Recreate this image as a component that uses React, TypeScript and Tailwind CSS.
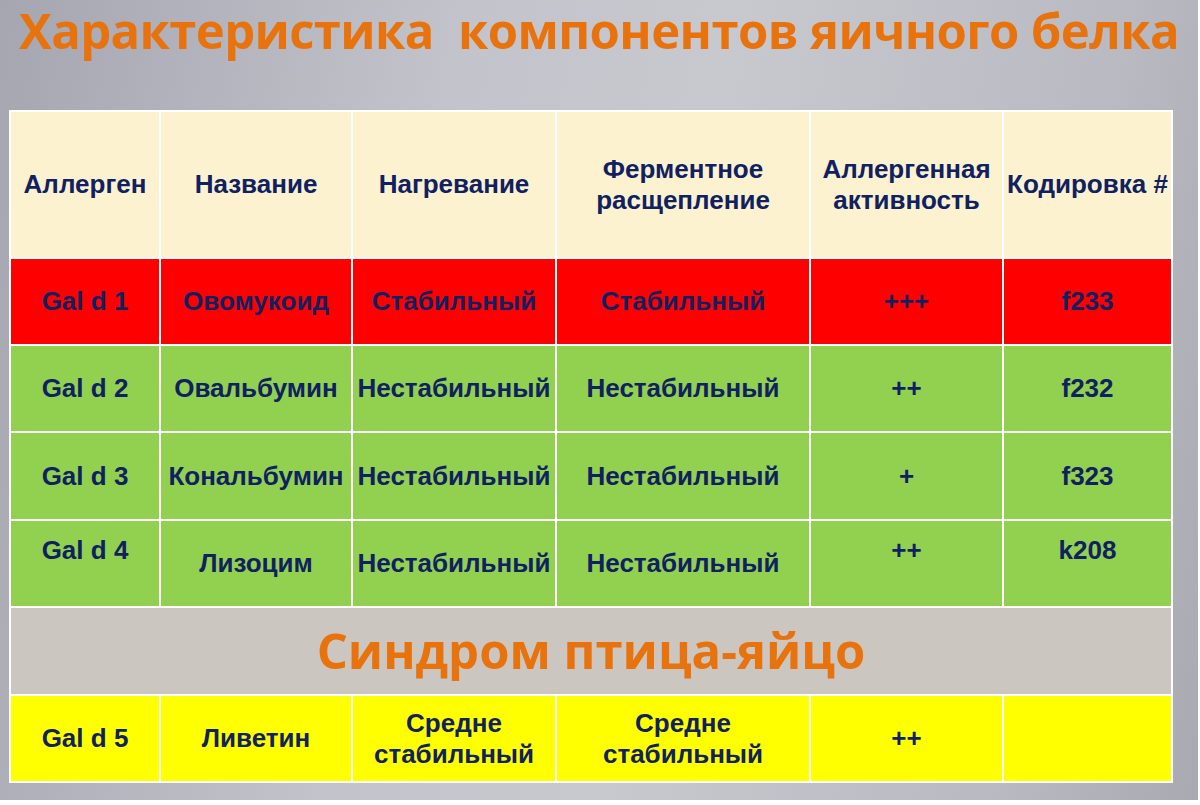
type Cell = { text: string; raised?: boolean };

type Row = { bg: string; cells: Cell[]; h: string };

const headers = [
  "Аллерген",
  "Название",
  "Нагревание",
  "Ферментное\nрасщепление",
  "Аллергенная\nактивность",
  "Кодировка #",
];

const rows: Row[] = [
  {
    bg: "bg-[#ff0000]",
    h: "h-[85px]",
    cells: [
      { text: "Gal d 1" },
      { text: "Овомукоид" },
      { text: "Стабильный" },
      { text: "Стабильный" },
      { text: "+++" },
      { text: "f233" },
    ],
  },
  {
    bg: "bg-[#92d050]",
    h: "h-[85px]",
    cells: [
      { text: "Gal d 2" },
      { text: "Овальбумин" },
      { text: "Нестабильный" },
      { text: "Нестабильный" },
      { text: "++" },
      { text: "f232" },
    ],
  },
  {
    bg: "bg-[#92d050]",
    h: "h-[86px]",
    cells: [
      { text: "Gal d 3" },
      { text: "Кональбумин" },
      { text: "Нестабильный" },
      { text: "Нестабильный" },
      { text: "+" },
      { text: "f323" },
    ],
  },
  {
    bg: "bg-[#92d050]",
    h: "h-[85px]",
    cells: [
      { text: "Gal d 4", raised: true },
      { text: "Лизоцим" },
      { text: "Нестабильный" },
      { text: "Нестабильный" },
      { text: "++", raised: true },
      { text: "k208", raised: true },
    ],
  },
];

const lastRow: Cell[] = [
  { text: "Gal d 5" },
  { text: "Ливетин" },
  { text: "Средне\nстабильный" },
  { text: "Средне\nстабильный" },
  { text: "++" },
  { text: "" },
];

const calibri = { fontFamily: '"Open Sans", "Noto Sans", sans-serif' };

function TableCell({ cell, bg, h }: { cell: Cell; bg: string; h: string }) {
  return (
    <div
      className={`${bg} ${h} flex flex-col items-center text-center ${
        cell.raised ? "justify-start pt-[14px]" : "justify-center"
      }`}
    >
      {cell.text.split("\n").map((line, i) => (
        <span key={i} className="whitespace-nowrap leading-[31px]">
          {line}
        </span>
      ))}
    </div>
  );
}

export default function App() {
  return (
    <div className="w-[1200px] h-[805px] bg-white overflow-hidden">
      <div className="w-[1198px] h-[800px] bg-[linear-gradient(100deg,#a6a6b1_0%,#c3c3cb_35%,#c8c8cf_55%,#b9b9c1_85%,#a9a9b1_100%)] flex flex-col">
        <h1
          className="text-center text-[49px] font-bold text-[#e8720c] leading-[56px] pt-[2px] tracking-[-0.6px] whitespace-pre"
          style={calibri}
        >
          {"Характеристика  компонентов яичного белка"}
        </h1>

        <div
          className="ml-[9px] mt-[52px] w-[1164px] grid grid-cols-[148px_190px_202px_252px_191px_167px] gap-[2px] bg-white p-[2px] text-[#0f2160] font-bold text-[26px]"
          style={{ fontFamily: '"Liberation Sans", Arial, sans-serif' }}
        >
          {headers.map((hd, i) => (
            <TableCell key={i} cell={{ text: hd }} bg="bg-[#fdf2d0]" h="h-[145px]" />
          ))}

          {rows.map((r, ri) =>
            r.cells.map((c, ci) => <TableCell key={`${ri}-${ci}`} cell={c} bg={r.bg} h={r.h} />)
          )}

          <div className="col-span-6 h-[86px] bg-[#cbc7c0] flex items-center justify-center">
            <span className="text-[49px] font-bold text-[#e8720c] leading-none -mt-[2px]" style={calibri}>
              Синдром птица-яйцо
            </span>
          </div>

          {lastRow.map((c, i) => (
            <TableCell key={i} cell={c} bg="bg-[#ffff00]" h="h-[85px]" />
          ))}
        </div>
      </div>
    </div>
  );
}
